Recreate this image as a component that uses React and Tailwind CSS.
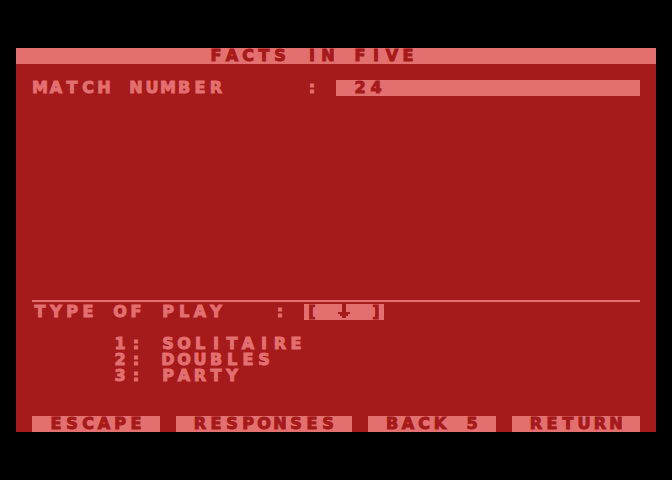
import React from 'react'

// Atari-style text: every character gets its own 16px cell
function Txt({ s, className = '' }) {
  return (
    <span className={`flex ${className}`}>
      {[...s].map((c, i) => (
        <span key={i} className="w-4 h-4 shrink-0 text-center">{c === ' ' ? '\u00a0' : c}</span>
      ))}
    </span>
  )
}

function DownArrow() {
  return (
    <svg width="16" height="16" viewBox="0 0 8 8" shapeRendering="crispEdges" fill="#a51a1b" className="block">
      <rect x="3" y="0" width="2" height="4" />
      <rect x="1" y="4" width="6" height="1" />
      <rect x="2" y="5" width="4" height="1" />
      <rect x="3" y="6" width="2" height="1" />
    </svg>
  )
}

export default function App() {
  return (
    <div className="w-[672px] h-[480px] bg-black pt-12 pl-4 overflow-hidden">
      <div
        className="w-[640px] h-[384px] grid grid-cols-[repeat(40,16px)] grid-rows-[repeat(24,16px)] bg-[#a51a1b] text-[#e46f6f] font-bold text-[16px] leading-4 [-webkit-text-stroke:1px_currentColor]"
        style={{ fontFamily: '"DejaVu Sans", Verdana, sans-serif' }}
      >
        {/* title bar */}
        <div className="row-start-1 col-start-1 col-span-full bg-[#e46f6f] text-[#a51a1b] pl-[192px]">
          <Txt s="FACTS IN FIVE" />
        </div>

        {/* match number */}
        <div className="row-start-3 col-start-2 col-span-12"><Txt s="MATCH NUMBER" /></div>
        <div className="row-start-3 col-start-19"><Txt s=":" /></div>
        <div className="row-start-3 col-start-21 col-span-19 bg-[#e46f6f] text-[#a51a1b] pl-4">
          <Txt s="24" />
        </div>

        {/* divider */}
        <div className="row-start-16 col-start-2 col-span-38 self-end mb-[2px] h-[2px] bg-[#e46f6f]" />

        {/* type of play */}
        <div className="row-start-17 col-start-2 col-span-12"><Txt s="TYPE OF PLAY" /></div>
        <div className="row-start-17 col-start-17"><Txt s=":" /></div>
        <div className="row-start-17 col-start-19 col-span-5 flex bg-[#e46f6f] text-[#a51a1b]">
          <Txt s="[ " />
          <span className="w-4 h-4 block"><DownArrow /></span>
          <Txt s=" ]" />
        </div>

        <div className="row-start-19 col-start-7 col-span-12"><Txt s="1: SOLITAIRE" /></div>
        <div className="row-start-20 col-start-7 col-span-12"><Txt s="2: DOUBLES" /></div>
        <div className="row-start-21 col-start-7 col-span-12"><Txt s="3: PARTY" /></div>

        {/* function keys */}
        <div className="row-start-24 col-start-2 col-span-8 bg-[#e46f6f] text-[#a51a1b] pl-4"><Txt s="ESCAPE" /></div>
        <div className="row-start-24 col-start-11 col-span-11 bg-[#e46f6f] text-[#a51a1b] pl-4"><Txt s="RESPONSES" /></div>
        <div className="row-start-24 col-start-23 col-span-8 bg-[#e46f6f] text-[#a51a1b] pl-4"><Txt s="BACK 5" /></div>
        <div className="row-start-24 col-start-32 col-span-8 bg-[#e46f6f] text-[#a51a1b] pl-4"><Txt s="RETURN" /></div>
      </div>
    </div>
  )
}
